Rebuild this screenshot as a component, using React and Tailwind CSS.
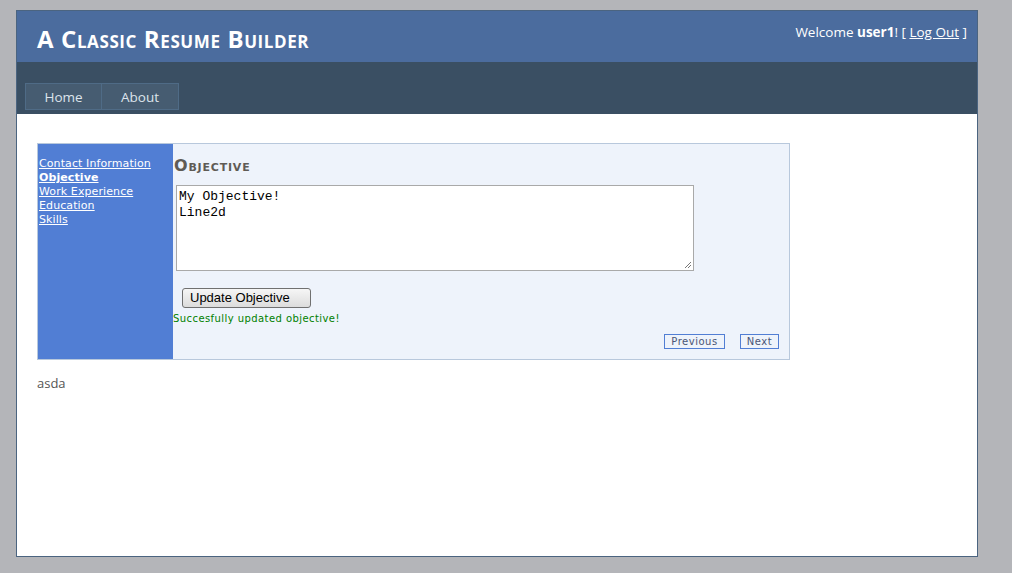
export default function App() {
  const verdana = { fontFamily: '"DejaVu Sans", Verdana, sans-serif' };
  return (
    <div className="w-[1012px] h-[573px] bg-[#b4b5b9] pt-[10px] pl-[16px] overflow-hidden" style={{ fontFamily: '"Open Sans", "Noto Sans", sans-serif' }}>
      <div className="w-[962px] h-[547px] border border-[#4b6480] bg-white flex flex-col">
        {/* header */}
        <div className="h-[51px] bg-[#4b6c9e] flex items-start justify-between">
          <h1 className="ml-[20px] mt-[13px] text-[24px] leading-[30px] font-bold text-white [font-variant:small-caps] tracking-[0.6px]" style={{ fontFamily: '"Open Sans", sans-serif' }}>
            A Classic Resume Builder
          </h1>
          <div className="mt-[11px] mr-[10px] text-[13.5px] leading-[20px] text-white">
            Welcome <span className="font-bold">user1</span>! [ <a className="underline">Log Out</a> ]
          </div>
        </div>
        {/* nav */}
        <div className="h-[52px] bg-[#3a4f63] flex items-end pl-[8px] pb-[4px]">
          <div className="flex h-[27px]">
            <div className="w-[77px] h-full bg-[#465c71] border border-[#4f6b86] flex items-center justify-center pt-[1px] text-[13.5px] text-[#dde4ec]">Home</div>
            <div className="w-[77px] h-full bg-[#465c71] border border-[#4f6b86] border-l-0 flex items-center justify-center pt-[1px] text-[13.5px] text-[#dde4ec]">About</div>
          </div>
        </div>
        {/* content */}
        <div className="pl-[20px] pt-[29px]">
          <div className="w-[753px] h-[217px] border border-[#b8c8dc] flex bg-[#eef3fb]">
            <div className="w-[135px] bg-[#517ed4] pt-[13px] pl-[1px] flex flex-col text-[11px] leading-[14px] text-white tracking-[0.1px]" style={verdana}>
              <a className="underline">Contact Information</a>
              <a className="underline font-bold">Objective</a>
              <a className="underline">Work Experience</a>
              <a className="underline">Education</a>
              <a className="underline">Skills</a>
            </div>
            <div className="flex-1 flex flex-col">
              <h2 className="mt-[12px] ml-[1px] text-[16px] leading-[20px] font-bold tracking-[0.8px] text-[#5f5b55] [font-variant:small-caps]" style={verdana}>Objective</h2>
              <div className="ml-[3px] mt-[9px] w-[518px] h-[86px] bg-white border border-[#a9a9a9] relative pt-[3px] px-[2px] text-[13px] leading-[16px] text-black" style={{ fontFamily: '"Liberation Mono", "Courier New", monospace' }}>
                <div>My Objective!</div>
                <div>Line2d</div>
                <svg className="absolute right-[1px] bottom-[1px]" width="8" height="8" viewBox="0 0 8 8">
                  <path d="M7 1 L1 7 M7 4 L4 7" stroke="#777" strokeWidth="1" />
                </svg>
              </div>
              <div className="ml-[9px] mt-[17px] w-[129px] h-[20px] border border-[#707070] rounded-[3px] bg-gradient-to-b from-[#f6f6f6] to-[#dcdcdc] flex items-center pl-[7px] text-[13px] text-black" style={{ fontFamily: '"Liberation Sans", Arial, sans-serif' }}>
                Update Objective
              </div>
              <div className="mt-[4px] text-[10px] leading-[13px] text-[#008000] tracking-[0.43px]" style={verdana}>Succesfully updated objective!</div>
              <div className="flex justify-end gap-[15px] mt-[9px] mr-[10px]">
                <div className="w-[61px] h-[15px] border border-[#517ed4] flex items-center justify-center text-[10px] tracking-[0.5px] text-[#4a5575]" style={verdana}>Previous</div>
                <div className="w-[39px] h-[15px] border border-[#517ed4] flex items-center justify-center text-[10px] tracking-[0.5px] text-[#4a5575]" style={verdana}>Next</div>
              </div>
            </div>
          </div>
          <div className="mt-[14px] text-[13px] leading-[18px] text-[#555]">asda</div>
        </div>
      </div>
    </div>
  );
}
